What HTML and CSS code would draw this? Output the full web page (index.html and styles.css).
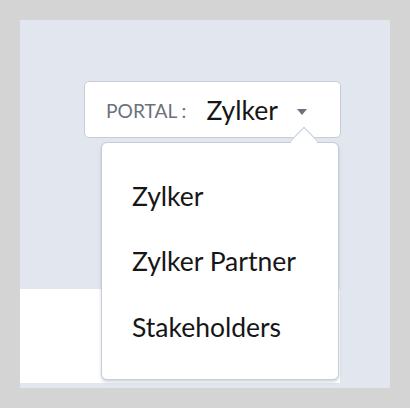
FILE: index.html
```html
<!DOCTYPE html>
<html>
<head>
<meta charset="utf-8">
<link rel="stylesheet" href="styles.css">
</head>
<body>
<div class="panel">
  <div class="header">
    <div class="selector">
      <span class="label">PORTAL :</span>
      <span class="value">Zylker</span>
      <span class="caret"></span>
    </div>
  </div>
  <div class="content"></div>
  <div class="menu">
    <span class="pointer"></span>
    <div class="item">Zylker</div>
    <div class="item">Zylker Partner</div>
    <div class="item">Stakeholders</div>
  </div>
</div>
</body>
</html>
```
FILE: styles.css
```css
html, body {
  margin: 0;
  padding: 0;
  background: #d4d4d4;
  font-family: Lato, "Noto Sans", sans-serif;
}
.panel {
  position: relative;
  width: 370px;
  height: 368px;
  margin: 20px;
  background: #e2e6ee;
}
.header {
  padding: 61px 0 0 64px;
}
.selector {
  box-sizing: border-box;
  width: 257px;
  height: 57px;
  background: #fff;
  border: 1.5px solid #c6cdd8;
  border-radius: 5px;
  display: flex;
  align-items: center;
  padding-left: 21px;
}
.label {
  font-size: 19.2px;
  color: #6b717d;
  margin-right: 20px;
  margin-top: 2px;
}
.value {
  font-size: 26.5px;
  color: #161616;
}
.caret {
  width: 0;
  height: 0;
  border-left: 5.5px solid transparent;
  border-right: 5.5px solid transparent;
  border-top: 6.5px solid #6b717d;
  margin-left: 19px;
  margin-top: 4px;
}
.content {
  width: 320px;
  height: 94px;
  margin-top: 151px;
  background: #fff;
}
.menu {
  position: absolute;
  left: 81px;
  top: 122px;
  box-sizing: border-box;
  width: 238px;
  height: 238px;
  background: #fff;
  border: 1.5px solid #c6cdd8;
  border-radius: 6px;
  box-shadow: 0 2px 3px rgba(120, 135, 160, 0.35);
  padding-top: 20.5px;
}
.pointer {
  position: absolute;
  left: 192px;
  top: -12px;
  width: 19px;
  height: 19px;
  background: #fff;
  border-top: 1.5px solid #c6cdd8;
  border-left: 1.5px solid #c6cdd8;
  transform: rotate(45deg);
}
.item {
  position: relative;
  padding-left: 30px;
  font-size: 26.5px;
  line-height: 65.5px;
  color: #161616;
}
```
